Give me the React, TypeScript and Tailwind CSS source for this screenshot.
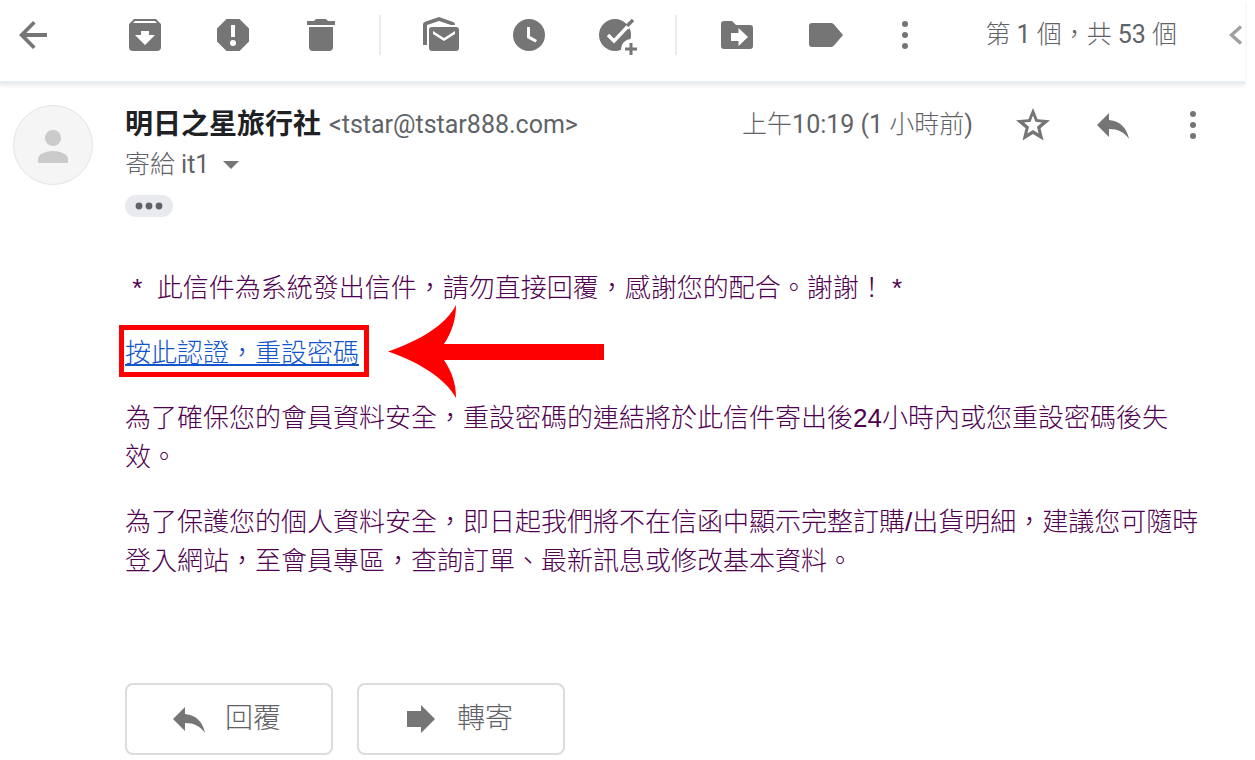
import type { ReactNode } from 'react';

const uiFont = "font-[Roboto,'Noto_Sans_CJK_TC',sans-serif]";
const mailFont = "font-['Liberation_Sans','Noto_Sans_CJK_TC',sans-serif]";

function Icon({ children }: { children: ReactNode }) {
  return (
    <svg viewBox="0 0 40 40" className="block size-10" fill="currentColor" aria-hidden="true">
      {children}
    </svg>
  );
}

function IconButton({ label, children }: { label: string; children: ReactNode }) {
  return (
    <button type="button" aria-label={label} className="block size-10 shrink-0 text-[#757575]">
      <Icon>{children}</Icon>
    </button>
  );
}

// Latin letters and digits use the regular weight beside the light Chinese text.
function Latin({ children }: { children: ReactNode }) {
  return <span className="font-normal">{children}</span>;
}

function Divider() {
  return <div className="ml-[38px] mr-10 h-10 w-0.5 shrink-0 bg-[#e9edf1]" />;
}

const moreDots = (
  <>
    <circle cx="20" cy="9" r="3" />
    <circle cx="20" cy="20" r="3" />
    <circle cx="20" cy="31" r="3" />
  </>
);

const replyArrow = <path d="M16 15V8L4 20l12 12v-8c9 0 15 3 20 10C34 24 28 16 16 15z" />;

function Toolbar() {
  return (
    <header className="flex h-[84px] items-center border-b-3 border-[#e8edf1] pb-[11px] pl-[13px] shadow-[0_2px_4px_rgba(0,0,0,0.07)]">
      <IconButton label="返回">
        <path d="M20 6 6 20l14 14 2.6-2.6L13.2 22H34v-4H13.2l9.4-9.4z" />
      </IconButton>
      <div className="ml-[72px] flex gap-12">
        <IconButton label="封存">
          <path
            fillRule="evenodd"
            d="M9 4h22l5 5v23a4 4 0 0 1-4 4H8a4 4 0 0 1-4-4V9zM10 6 8 8h24l-2-2zM16 16v4h-6l10 10 10-10h-6v-4z"
          />
        </IconButton>
        <IconButton label="回報為垃圾郵件">
          <path
            fillRule="evenodd"
            d="M13.5 4h13L36 13.500v13L26.500 36h-13L4 26.500v-13zM18 10v12h4V10zM20 25a3 3 0 1 0 0 6 3 3 0 0 0 0-6z"
          />
        </IconButton>
        <IconButton label="刪除">
          <path d="M13 6l2-2h10l2 2h7v4H6V6zM8 12h24v20a4 4 0 0 1-4 4H12a4 4 0 0 1-4-4z" />
        </IconButton>
      </div>
      <Divider />
      <div className="flex gap-12">
        <IconButton label="標示為未讀取">
          <path d="M2 30V9.500a3 3 0 0 1 2-2.800L18 2l14 5a3 3 0 0 1 2 3h-4L18 6 6 10v20z" />
          <path
            fillRule="evenodd"
            d="M11 12h24a3 3 0 0 1 3 3v18a3 3 0 0 1-3 3H11a3 3 0 0 1-3-3V15a3 3 0 0 1 3-3zM12 16v3l11 7 11-7v-3l-11 7z"
          />
        </IconButton>
        <IconButton label="延後">
          <path fillRule="evenodd" d="M20 4a16 16 0 1 0 0 32 16 16 0 0 0 0-32zM18 12h3v9l7 4-1.500 2.500L18 23z" />
        </IconButton>
        <IconButton label="新增至 Tasks">
          <circle cx="18" cy="20" r="16" />
          <path d="M11 20l6 6L35 7" fill="none" stroke="white" strokeWidth="3.4" />
          <path d="M30 11l6-6" fill="none" stroke="currentColor" strokeWidth="3.4" />
          <path d="M29 11l3 3" fill="none" stroke="white" strokeWidth="1.4" />
          <circle cx="34" cy="34" r="10" fill="white" />
          <path d="M32.500 28h3v4.500H40v3h-4.500V40h-3v-4.500H28v-3h4.500z" />
        </IconButton>
      </div>
      <Divider />
      <div className="flex gap-12">
        <IconButton label="移至">
          <path
            fillRule="evenodd"
            d="M7 6h8l4 4h14a3 3 0 0 1 3 3v18a3 3 0 0 1-3 3H7a3 3 0 0 1-3-3V9a3 3 0 0 1 3-3zM21.500 13v5H14v8h7.500v5l9.500-9z"
          />
        </IconButton>
        <IconButton label="標籤">
          <path d="M7 8h19c1.300 0 2.300.6 3 1.500L38 20l-9 10.500c-.7.9-1.700 1.500-3 1.500H7a3 3 0 0 1-3-3V11a3 3 0 0 1 3-3z" />
        </IconButton>
      </div>
      <div className="ml-10">
        <IconButton label="更多">{moreDots}</IconButton>
      </div>
      <span className="ml-auto mr-[52px] whitespace-nowrap text-[25px] leading-10 text-[#5f6368]">
        第 <Latin>1</Latin> 個，共 <Latin>53</Latin> 個
      </span>
      <button type="button" aria-label="較新" className="mr-0.5 shrink-0 text-[#a0a0a0]">
        <svg viewBox="0 0 14 20" className="block h-5 w-3.5" fill="none" stroke="currentColor" strokeWidth="3.4" aria-hidden="true">
          <path d="M12 1.500 2.500 10l9.500 8.500" />
        </svg>
      </button>
    </header>
  );
}

function Avatar() {
  return (
    <svg viewBox="0 0 80 80" className="block size-20 shrink-0" role="img" aria-label="寄件者">
      <circle cx="40" cy="40" r="39.500" fill="#f5f5f5" stroke="#e4e4e4" />
      <circle cx="40" cy="33" r="8" fill="#cbcbcb" />
      <path d="M25 58v-4c0-5 8-8 15-8s15 3 15 8v4z" fill="#cbcbcb" />
    </svg>
  );
}

function MessageHeader() {
  return (
    <div className="flex gap-8 pl-[13px] pr-8 pt-[21px]">
      <Avatar />
      <div className="min-w-0 flex-1">
        <div className="flex h-10 items-center">
          <h1 className="whitespace-nowrap text-[28px] font-bold leading-10 text-[#202124]">明日之星旅行社</h1>
          <span className="ml-2 whitespace-nowrap text-[25px] font-normal text-[#5f6368]">&lt;tstar@tstar888.com&gt;</span>
          <span className="ml-auto mr-10 whitespace-nowrap text-[25px] text-[#5f6368]">
            上午<Latin>10:19 (1</Latin> 小時前<Latin>)</Latin>
          </span>
          <div className="flex gap-10">
            <IconButton label="加上星號">
              <path
                fillRule="evenodd"
                d="M20 3l4.600 11.300 12.400 1-9.500 8 3 12.200L20 29l-10.500 6.500 3-12.200-9.500-8 12.400-1zM20 10.500l-2.400 6.300-6.600.7 5 4.300-1.600 6.700L20 25l5.600 3.500-1.600-6.700 5-4.300-6.600-.7z"
              />
            </IconButton>
            <IconButton label="回覆寄件者">{replyArrow}</IconButton>
            <IconButton label="更多訊息選項">{moreDots}</IconButton>
          </div>
        </div>
        <button type="button" className="flex h-10 items-center gap-[14px] text-[25px] text-[#5f6368]">
          <span>
            寄給 <Latin>it1</Latin>
          </span>
          <svg viewBox="0 0 16 8" className="block h-2 w-4" fill="#757575" aria-hidden="true">
            <path d="M0 0h16L8 8z" />
          </svg>
        </button>
        <button
          type="button"
          aria-label="顯示裁剪的內容"
          className="mt-2.5 flex h-[22px] w-12 items-center justify-center rounded-full bg-[#e8eaed] text-[#5f6368]"
        >
          <svg viewBox="0 0 28 8" className="block h-2 w-7" fill="currentColor" aria-hidden="true">
            <circle cx="4" cy="4" r="3.400" />
            <circle cx="14" cy="4" r="3.400" />
            <circle cx="24" cy="4" r="3.400" />
          </svg>
        </button>
      </div>
    </div>
  );
}

function MessageBody() {
  return (
    <div className={`${mailFont} mt-[52px] flex flex-col gap-[26px] pl-[125px] pr-8 text-[26px] font-light leading-[39px] text-[#500050]`}>
      <p>&nbsp;*&nbsp; 此信件為系統發出信件，請勿直接回覆，感謝您的配合。謝謝！ *</p>
      <p className="relative self-start">
        <a href="#reset" className="text-[#1155cc] underline decoration-2 underline-offset-2">
          按此認證，重設密碼
        </a>
        <span className="pointer-events-none absolute -left-1.5 -right-2.5 -top-[9px] h-[52px] border-5 border-[#ff0000]" />
        <svg
          viewBox="0 0 216 93"
          className="pointer-events-none absolute -top-[29px] left-full ml-[29px] h-[93px] w-[216px]"
          fill="#ff0000"
          aria-hidden="true"
        >
          <path d="M0 46.500C31 36 58 20 68 0c0 14-4 27-12 39h160v16H56c8 12 12 24 12 38C58 74 31 57 0 46.500z" />
        </svg>
      </p>
      <p>為了確保您的會員資料安全，重設密碼的連結將於此信件寄出後24小時內或您重設密碼後失效。</p>
      <p>為了保護您的個人資料安全，即日起我們將不在信函中顯示完整訂購/出貨明細，建議您可隨時登入網站，至會員專區，查詢訂單、最新訊息或修改基本資料。</p>
    </div>
  );
}

function ActionButton({ label, children }: { label: string; children: ReactNode }) {
  return (
    <button
      type="button"
      className="flex h-[72px] w-[208px] items-center gap-4 rounded-lg border-2 border-[#dadce0] pl-[42px] text-[28px] text-[#5f6368]"
    >
      <span className="text-[#757575]">
        <Icon>{children}</Icon>
      </span>
      {label}
    </button>
  );
}

export default function App() {
  return (
    <div className={`${uiFont} min-h-screen bg-white pr-2.5 font-light`} lang="zh-Hant">
      <Toolbar />
      <main>
        <MessageHeader />
        <MessageBody />
        <div className="mt-[102px] flex gap-6 pl-[125px]">
          <ActionButton label="回覆">{replyArrow}</ActionButton>
          <ActionButton label="轉寄">
            <path d="M6 12h14V6l14 14-14 14v-6H6z" />
          </ActionButton>
        </div>
      </main>
    </div>
  );
}
